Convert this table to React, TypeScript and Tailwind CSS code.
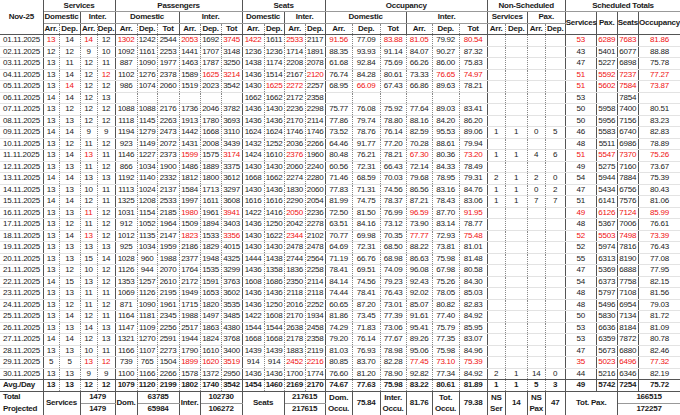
import React from "react";

const SR = "[border-right:1px_solid_#555]";
const DR = "[border-right:1px_dotted_#888]";
const HB = "[border-bottom:1px_solid_#999]";
const DB = "[border-bottom:1px_solid_#e3e3e3]";
const KB = "[border-bottom:1px_solid_#555]";

const data: string[] = [
  "13* 14 14* 12 1302* 1242 2544 2053* 1692 3745* 1422* 1611 2533* 2117 91.56* 77.09 83.88* 81.05* 79.92 80.54* - - - - 53* 6289* 7683* 81.86*",
  "12 12 9 10 1092 1161 2253 1441 1707 3148 1236 1236 1714 1891 88.35 93.93 91.14 84.07 90.27 87.32 - - - - 43 5401 6077 88.88",
  "13 11 12 11 887 1090 1977 1463 1787 3250 1438 1174 2208 2078 61.68 92.84 75.69 66.26 86.00 75.83 - - - - 47 5227 6898 75.78",
  "13 14 12 12* 1102 1276 2378 1589 1625* 3214* 1436 1514 2167 2120* 76.74 84.28 80.61 73.33 76.65* 74.97* - - - - 51* 5592* 7237* 77.27*",
  "13 14* 12 12 986 1074 2060 1519 2023 3542 1430 1625* 2272* 2257 68.95 66.09* 67.43 66.86 89.63 78.21 - - - - 51* 5602* 7584* 73.87*",
  "14 14 12 13 - - - - - - 1662 1662 2172 2358 - - - - - - - - - - 53 - 7854 -",
  "13 12 12 12 1088 1088 2176 1736 2046 3782 1436 1430 2236 2298 75.77 76.08 75.92 77.64 89.03 83.41 - - - - 50 5958 7400 80.51",
  "13 13 12 12 1118 1145 2263 1913 1780 3693 1436 1436 2170 2114 77.86 79.74 78.80 88.16 84.20 86.20 - - - - 50 5956 7156 83.23",
  "14 14 9 9 1194 1279 2473 1442 1668 3110 1624 1624 1746 1746 73.52 78.76 76.14 82.59 95.53 89.06 1 1 0 5 46 5583 6740 82.83",
  "13 12 11 12 923 1149 2072 1431 2008 3439 1432 1252 2036 2266 64.46 91.77 77.20 70.28 88.61 79.94 - - - - 48 5511 6986 78.89",
  "13 14 13* 11 1146 1227 2373 1599* 1575 3174* 1424 1610 2376* 1960 80.48 76.21 78.21 67.30* 80.36 73.20* 1 1 4 6 51* 5547* 7370* 75.26*",
  "13 13 11 12 866 1034 1900 1486 1889 3375 1430 1430 2060 2240 60.56 72.31 66.43 72.14 84.33 78.49 - - - - 49 5275 7160 73.67",
  "14 14 13 13 1192 1140 2332 1812 1800 3612 1668 1662 2274 2280 71.46 68.59 70.03 79.68 78.95 79.31 2 1 2 0 54 5944 7884 75.39",
  "13 13 10 11 1113 1024 2137 1584 1713 3297 1430 1436 1830 2060 77.83 71.31 74.56 86.56 83.16 84.76 1 1 0 2 47 5434 6756 80.43",
  "14 14 12 11 1325 1208 2533 1997 1611 3608 1616 1616 2290 2054 81.99 74.75 78.37 87.21 78.43 83.06 1 1 7 7 51 6141 7576 81.06",
  "13 13 11* 12 1031 1154 2185 1980* 1961 3941* 1422 1416 2050* 2236 72.50 81.50 76.99 96.59* 87.70 91.95* - - - - 49* 6126* 7124* 85.99*",
  "13 12 11 12 912 1052 1964 1509 1894 3403 1436 1250 2042 2278 63.51 84.16 73.12 73.90 83.14 78.77 - - - - 48 5367 7006 76.61",
  "13 14 13* 12 1012 1135 2147 1823* 1533 3356* 1430 1622 2344* 2102 70.77 69.98 70.35 77.77* 72.93 75.48* - - - - 52* 5503* 7498* 73.39*",
  "13 13 13 13 925 1034 1959 2186 1829 4015 1430 1430 2478 2478 64.69 72.31 68.50 88.22 73.81 81.01 - - - - 52 5974 7816 76.43",
  "13 13 15 14 1028 960 1988 2377 1948 4325 1444 1438 2744 2564 71.19 66.76 68.98 86.63 75.98 81.48 - - - - 55 6313 8190 77.08",
  "13 12 10 12 1126 944 2070 1764 1535 3299 1436 1358 1836 2258 78.41 69.51 74.09 96.08 67.98 80.58 - - - - 47 5369 6888 77.95",
  "14 15 13 12 1353 1257 2610 2172 1591 3763 1608 1686 2350 2114 84.14 74.56 79.23 92.43 75.26 84.30 - - - - 54 6373 7758 82.15",
  "13 13 11 11 1069 1126 2195 1949 1653 3602 1436 1436 2118 2118 74.44 78.41 76.43 92.02 78.05 85.03 - - - - 48 5797 7108 81.56",
  "13 12 11 12 871 1090 1961 1715 1820 3535 1436 1250 2016 2252 60.65 87.20 73.01 85.07 80.82 82.83 - - - - 48 5496 6954 79.03",
  "13 14 12 11 1164 1181 2345 1988 1497 3485 1422 1608 2170 1934 81.86 73.45 77.39 91.61 77.40 84.92 - - - - 50 5830 7134 81.72",
  "13 13 14 13 1147 1109 2256 2517 1863 4380 1544 1544 2638 2458 74.29 71.83 73.06 95.41 75.79 85.95 - - - - 53 6636 8184 81.09",
  "14 14 12 13 1321 1270 2591 1944 1824 3768 1668 1668 2178 2358 79.20 76.14 77.67 89.26 77.35 83.07 - - - - 53 6359 7872 80.78",
  "13 13 10 11 1166 1107 2273 1790 1610 3400 1439 1439 1883 2119 81.03 76.93 78.98 95.06 75.98 84.96 - - - - 47 5673 6880 82.46",
  "5 5 13* 12* 739 765 1504 1899* 1620* 3519* 914 914 2452* 2216* 80.85 83.70 82.28 77.45* 73.10* 75.39* - - - - 35* 5023* 6496* 77.32*",
  "13 13 9 9 1100 1166 2266 1578 1372 2950 1436 1436 1700 1774 76.60 81.20 78.90 92.82 77.34 84.92 2 1 14 0 44 5216 6346 82.19",
];

const avg =
  "13 13 12 12 1079 1120 2199 1802 1740 3542 1454 1460 2169 2170 74.67 77.63 75.98 83.22 80.61 81.89 1 1 5 3 49 5742 7254 75.72";

const SOLID_AFTER = new Set([4, 10, 14, 20, 24, 25, 26, 27]);

function rightBorder(c: number): string {
  if (c === 28) return "";
  return SOLID_AFTER.has(c) ? SR : DR;
}

function Row({ label, values, bottom, bold }: { label: string; values: string; bottom: string; bold?: boolean }) {
  const vals = values.split(" ");
  return (
    <tr className="h-[11.5px]">
      <td className={`pl-[3px] text-left whitespace-nowrap ${SR} ${bottom} ${bold ? "font-bold" : ""}`}>{label}</td>
      {vals.map((v, i) => {
        const red = v.endsWith("*");
        const t = v.replace("*", "");
        return (
          <td
            key={i}
            className={`p-0 text-center whitespace-nowrap ${rightBorder(i + 1)} ${bottom} ${red ? "text-[#f01010]" : ""} ${bold ? "font-bold" : ""}`}
          >
            {t === "-" ? "" : t}
          </td>
        );
      })}
    </tr>
  );
}

export default function App() {
  const th = "p-0 font-bold text-center whitespace-nowrap";
  return (
    <div className="w-[680px] h-[415px] bg-white overflow-hidden text-[#1a1a1a] [font-family:'Liberation_Sans',Arial,sans-serif]">
      <table className="table-fixed w-[680px] border-collapse text-[8px] tracking-[-0.25px] leading-none">
        <colgroup>
          <col className="w-[43px]" />
          <col className="w-[16px]" />
          <col className="w-[21px]" />
          <col className="w-[17px]" />
          <col className="w-[18px]" />
          <col className="w-[22px]" />
          <col className="w-[20px]" />
          <col className="w-[22px]" />
          <col className="w-[21px]" />
          <col className="w-[21px]" />
          <col className="w-[21px]" />
          <col className="w-[22px]" />
          <col className="w-[20px]" />
          <col className="w-[21px]" />
          <col className="w-[20px]" />
          <col className="w-[27px]" />
          <col className="w-[28px]" />
          <col className="w-[26px]" />
          <col className="w-[26px]" />
          <col className="w-[27px]" />
          <col className="w-[28px]" />
          <col className="w-[18px]" />
          <col className="w-[22px]" />
          <col className="w-[18px]" />
          <col className="w-[20px]" />
          <col className="w-[31px]" />
          <col className="w-[21px]" />
          <col className="w-[21px]" />
          <col className="w-[42px]" />
        </colgroup>
        <thead>
          <tr className="h-[11.5px]">
            <th rowSpan={3} className={`${th} ${SR} ${KB}`}>Nov-25</th>
            <th colSpan={4} className={`${th} ${SR} ${HB}`}>Services</th>
            <th colSpan={6} className={`${th} ${SR} ${HB}`}>Passengers</th>
            <th colSpan={4} className={`${th} ${SR} ${HB}`}>Seats</th>
            <th colSpan={6} className={`${th} ${SR} ${HB}`}>Occupancy</th>
            <th colSpan={4} className={`${th} ${SR} ${HB}`}>Non-Scheduled</th>
            <th colSpan={4} className={`${th} ${HB}`}>Scheduled Totals</th>
          </tr>
          <tr className="h-[11.5px]">
            <th colSpan={2} className={`${th} ${SR} ${HB}`}>Domestic</th>
            <th colSpan={2} className={`${th} ${SR} ${HB}`}>Inter.</th>
            <th colSpan={3} className={`${th} ${SR} ${HB}`}>Domestic</th>
            <th colSpan={3} className={`${th} ${SR} ${HB}`}>Inter.</th>
            <th colSpan={2} className={`${th} ${SR} ${HB}`}>Domestic</th>
            <th colSpan={2} className={`${th} ${SR} ${HB}`}>Inter.</th>
            <th colSpan={3} className={`${th} ${SR} ${HB}`}>Domestic</th>
            <th colSpan={3} className={`${th} ${SR} ${HB}`}>Inter.</th>
            <th colSpan={2} className={`${th} ${SR} ${HB}`}>Services</th>
            <th colSpan={2} className={`${th} ${SR} ${HB}`}>Pax.</th>
            <th rowSpan={2} className={`${th} ${SR} ${KB}`}>Services</th>
            <th rowSpan={2} className={`${th} ${SR} ${KB}`}>Pax.</th>
            <th rowSpan={2} className={`${th} ${SR} ${KB}`}>Seats</th>
            <th rowSpan={2} className={`${th} ${KB}`}>Occupancy</th>
          </tr>
          <tr className="h-[11.5px]">
            <th className={`${th} ${DR} ${KB}`}>Arr.</th>
            <th className={`${th} ${SR} ${KB}`}>Dep.</th>
            <th className={`${th} ${DR} ${KB}`}>Arr.</th>
            <th className={`${th} ${SR} ${KB}`}>Dep.</th>
            <th className={`${th} ${DR} ${KB}`}>Arr.</th>
            <th className={`${th} ${DR} ${KB}`}>Dep.</th>
            <th className={`${th} ${SR} ${KB}`}>Tot</th>
            <th className={`${th} ${DR} ${KB}`}>Arr.</th>
            <th className={`${th} ${DR} ${KB}`}>Dep.</th>
            <th className={`${th} ${SR} ${KB}`}>Tot</th>
            <th className={`${th} ${DR} ${KB}`}>Arr.</th>
            <th className={`${th} ${SR} ${KB}`}>Dep.</th>
            <th className={`${th} ${DR} ${KB}`}>Arr.</th>
            <th className={`${th} ${SR} ${KB}`}>Dep.</th>
            <th className={`${th} ${DR} ${KB}`}>Arr.</th>
            <th className={`${th} ${DR} ${KB}`}>Dep.</th>
            <th className={`${th} ${SR} ${KB}`}>Tot</th>
            <th className={`${th} ${DR} ${KB}`}>Arr.</th>
            <th className={`${th} ${DR} ${KB}`}>Dep.</th>
            <th className={`${th} ${SR} ${KB}`}>Tot</th>
            <th className={`${th} ${DR} ${KB}`}>Arr.</th>
            <th className={`${th} ${SR} ${KB}`}>Dep.</th>
            <th className={`${th} ${DR} ${KB}`}>Arr.</th>
            <th className={`${th} ${SR} ${KB}`}>Dep.</th>
          </tr>
        </thead>
        <tbody>
          {data.map((r, i) => (
            <Row
              key={i}
              label={`${String(i + 1).padStart(2, "0")}.11.2025`}
              values={r}
              bottom={i === data.length - 1 ? KB : DB}
            />
          ))}
          <Row label="Avg./Day" values={avg} bottom={KB} bold />
          <tr className="h-[11.5px] font-bold">
            <td className={`pl-[3px] text-left ${SR}`}>Total</td>
            <td rowSpan={2} colSpan={2} className={`text-center ${SR} ${KB}`}>Services</td>
            <td colSpan={2} className={`text-center ${SR} ${HB}`}>1479</td>
            <td rowSpan={2} className={`text-center ${SR} ${KB}`}>Dom.</td>
            <td colSpan={2} className={`text-center ${SR} ${HB}`}>63785</td>
            <td rowSpan={2} className={`text-center ${SR} ${KB}`}>Inter.</td>
            <td colSpan={2} className={`text-center ${SR} ${HB}`}>102730</td>
            <td rowSpan={2} colSpan={2} className={`text-center ${SR} ${KB}`}>Seats</td>
            <td colSpan={2} className={`text-center ${SR} ${HB}`}>217615</td>
            <td rowSpan={2} className={`text-center leading-[11.5px] ${SR} ${KB}`}>Dom.<br />Occu.</td>
            <td rowSpan={2} className={`text-center ${SR} ${KB}`}>75.84</td>
            <td rowSpan={2} className={`text-center leading-[11.5px] ${SR} ${KB}`}>Inter.<br />Occu.</td>
            <td rowSpan={2} className={`text-center ${SR} ${KB}`}>81.76</td>
            <td rowSpan={2} className={`text-center leading-[11.5px] ${SR} ${KB}`}>Tot.<br />Occu.</td>
            <td rowSpan={2} className={`text-center ${SR} ${KB}`}>79.38</td>
            <td rowSpan={2} className={`text-center leading-[11.5px] ${SR} ${KB}`}>NS<br />Ser</td>
            <td rowSpan={2} className={`text-center ${SR} ${KB}`}>14</td>
            <td rowSpan={2} className={`text-center leading-[11.5px] ${SR} ${KB}`}>NS<br />Pax</td>
            <td rowSpan={2} className={`text-center ${SR} ${KB}`}>47</td>
            <td rowSpan={2} colSpan={2} className={`text-center ${SR} ${KB}`}>Tot. Pax.</td>
            <td colSpan={2} className={`text-center ${HB}`}>166515</td>
          </tr>
          <tr className="h-[11.5px] font-bold">
            <td className={`pl-[3px] text-left ${SR} ${KB}`}>Projected</td>
            <td colSpan={2} className={`text-center ${SR} ${KB}`}>1479</td>
            <td colSpan={2} className={`text-center ${SR} ${KB}`}>65984</td>
            <td colSpan={2} className={`text-center ${SR} ${KB}`}>106272</td>
            <td colSpan={2} className={`text-center ${SR} ${KB}`}>217615</td>
            <td colSpan={2} className={`text-center ${KB}`}>172257</td>
          </tr>
        </tbody>
      </table>
    </div>
  );
}
